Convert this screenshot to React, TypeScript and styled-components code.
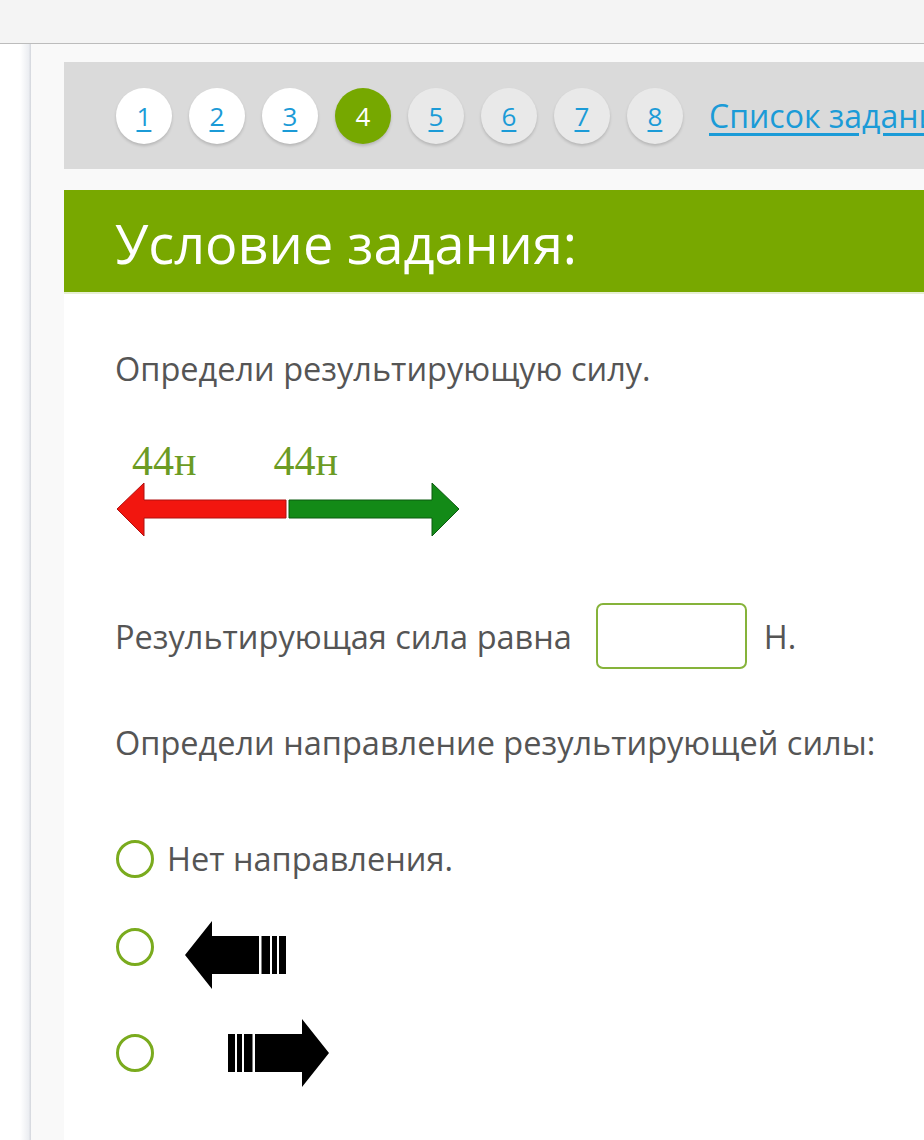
import * as React from 'react';
import styled, { createGlobalStyle } from 'styled-components';

const GlobalStyle = createGlobalStyle`
  html, body {
    margin: 0;
    padding: 0;
    background: #ffffff;
    font-family: 'Open Sans', 'Noto Sans', sans-serif;
  }
`;

const TopBar = styled.div`
  height: 43px;
  background: #f4f4f4;
  border-bottom: 1px solid #bcbcbc;
`;

const Page = styled.div`
  display: flex;
  height: 1096px;
  overflow: hidden;
`;

const Sidebar = styled.div`
  width: 31px;
  flex: none;
  background: linear-gradient(90deg, #ffffff 0%, #ffffff 65%, #eceef2 92%, #d3d6dc 100%);
`;

const Main = styled.div`
  flex: 1;
  min-width: 0;
  background: #f9f9f9;
  padding: 18px 0 0 33px;
  overflow: hidden;
`;

const Inner = styled.div`
  width: 1000px;
`;

const NavPanel = styled.div`
  height: 107px;
  background: #dadada;
  display: flex;
  align-items: center;
  gap: 17px;
  padding-left: 52px;
`;

const NavCircle = styled.a<{ $variant: 'done' | 'current' | 'todo' }>`
  width: 56px;
  height: 56px;
  flex: none;
  border-radius: 50%;
  display: flex;
  align-items: center;
  justify-content: center;
  font-size: 26px;
  color: ${(p) => (p.$variant === 'current' ? '#ffffff' : '#1b9bd7')};
  text-decoration: ${(p) => (p.$variant === 'current' ? 'none' : 'underline')};
  text-underline-offset: 4px;
  background: ${(p) =>
    p.$variant === 'current' ? '#76a800' : p.$variant === 'done' ? '#ffffff' : '#e9e9e9'};
  box-shadow: 0 2px 3px rgba(0, 0, 0, 0.16);
`;

const TaskListLink = styled.a`
  margin-left: 9px;
  font-size: 32px;
  color: #1b9bd7;
  text-decoration: underline;
  text-underline-offset: 5px;
  white-space: nowrap;
`;

const Header = styled.div`
  margin-top: 21px;
  height: 104px;
  background: #78a800;
  border-bottom: 2px solid #e6efd2;
  box-sizing: border-box;
  display: flex;
  align-items: center;
  padding: 4px 0 0 51px;
  color: #ffffff;
  font-size: 54px;
`;

const Body = styled.div`
  background: #ffffff;
  padding: 55px 0 80px 51px;
  color: #555555;
  font-size: 32.5px;
`;

const Line = styled.div<{ $top?: number }>`
  line-height: 40px;
  margin-top: ${(p) => p.$top ?? 0}px;
`;

const Figure = styled.div`
  margin-top: 56px;
`;

const Labels = styled.div`
  display: flex;
  gap: 77px;
  padding-left: 17px;
  font-family: 'Liberation Serif', 'DejaVu Serif', serif;
  font-size: 42px;
  line-height: 32px;
  color: #6b9b24;
`;

const AnswerRow = styled.div`
  margin-top: 60px;
  display: flex;
  align-items: center;
  gap: 24px;
`;

const AnswerInput = styled.input`
  width: 151px;
  height: 66px;
  box-sizing: border-box;
  border: 2px solid #86b33a;
  border-radius: 7px;
  background: #ffffff;
  outline: none;
`;

const Unit = styled.span`
  margin-left: -7px;
`;

const Option = styled.label<{ $gap: number; $top: number }>`
  display: flex;
  align-items: center;
  gap: ${(p) => p.$gap}px;
  margin-top: ${(p) => p.$top}px;
  line-height: 40px;
`;

const Radio = styled.span`
  width: 38px;
  height: 38px;
  flex: none;
  box-sizing: border-box;
  border: 3px solid #7aab1e;
  border-radius: 50%;
  margin-left: 1px;
`;

const ArrowBox = styled.span<{ $drop: number }>`
  display: block;
  margin-top: ${(p) => p.$drop * 2}px;
`;

const ForceArrows = () => (
  <svg width="350" height="66" viewBox="0 0 350 66" style={{ display: 'block' }}>
    <polygon
      points="2,32 29,6 29,23 171,23 171,41 29,41 29,59"
      fill="#f2160f"
      stroke="#b01010"
      strokeWidth="1"
    />
    <polygon
      points="174,23 317,23 317,6 344,32 317,59 317,41 174,41"
      fill="#138a17"
      stroke="#0c5a10"
      strokeWidth="1"
    />
  </svg>
);

const BlackArrow = ({ dir }: { dir: 'left' | 'right' }) => (
  <svg
    width="104"
    height="70"
    viewBox="0 0 104 70"
    style={{ display: 'block', transform: dir === 'right' ? 'scaleX(-1)' : undefined }}
  >
    <polygon points="1,35 28,1 28,16 102,16 102,54 28,54 28,69" fill="#000" />
    <rect x="75" y="15" width="2.5" height="40" fill="#fff" />
    <rect x="86" y="15" width="2" height="40" fill="#fff" />
    <rect x="93" y="15" width="2" height="40" fill="#fff" />
  </svg>
);

const App = () => {
  const nums = [1, 2, 3, 4, 5, 6, 7, 8];
  return (
    <>
      <GlobalStyle />
      <TopBar />
      <Page>
        <Sidebar />
        <Main>
          <Inner>
            <NavPanel>
              {nums.map((n) => (
                <NavCircle key={n} href="#" $variant={n < 4 ? 'done' : n === 4 ? 'current' : 'todo'}>
                  {n}
                </NavCircle>
              ))}
              <TaskListLink href="#">Список заданий</TaskListLink>
            </NavPanel>
            <Header>Условие задания:</Header>
            <Body>
              <Line>Определи результирующую силу.</Line>
              <Figure>
                <Labels>
                  <span>44н</span>
                  <span>44н</span>
                </Labels>
                <ForceArrows />
              </Figure>
              <AnswerRow>
                <span>Результирующая сила равна</span>
                <AnswerInput type="text" />
                <Unit>Н.</Unit>
              </AnswerRow>
              <Line $top={54}>Определи направление результирующей силы:</Line>
              <Option $gap={13} $top={76}>
                <Radio />
                <span>Нет направления.</span>
              </Option>
              <Option $gap={30} $top={25}>
                <Radio />
                <ArrowBox $drop={8}>
                  <BlackArrow dir="left" />
                </ArrowBox>
              </Option>
              <Option $gap={72} $top={28}>
                <Radio />
                <ArrowBox $drop={0}>
                  <BlackArrow dir="right" />
                </ArrowBox>
              </Option>
            </Body>
          </Inner>
        </Main>
      </Page>
    </>
  );
};

export default App;
